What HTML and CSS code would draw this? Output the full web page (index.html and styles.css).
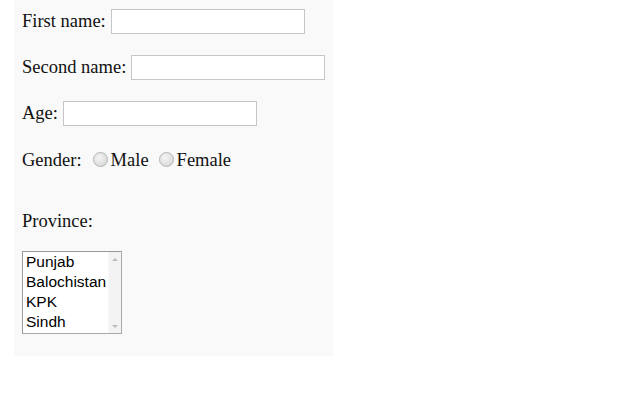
FILE: index.html
```html
<!DOCTYPE html>
<html>
<head>
<meta charset="utf-8">
<link rel="stylesheet" href="styles.css">
</head>
<body>
<form class="form">
  <div class="field"><label>First name:</label><input type="text" class="text-input"></div>
  <div class="field"><label>Second name:</label><input type="text" class="text-input"></div>
  <div class="field"><label>Age:</label><input type="text" class="text-input"></div>
  <div class="gender">
    <span>Gender:</span>
    <span class="radio radio-first"></span><span class="radio-label">Male</span>
    <span class="radio radio-second"></span><span class="radio-label">Female</span>
  </div>
  <div class="province">Province:</div>
  <div class="listbox">
    <div class="options">
      <div class="option">Punjab</div>
      <div class="option">Balochistan</div>
      <div class="option">KPK</div>
      <div class="option">Sindh</div>
    </div>
    <div class="scrollbar">
      <span class="arrow arrow-up"></span>
      <span class="arrow arrow-down"></span>
    </div>
  </div>
</form>
</body>
</html>
```
FILE: styles.css
```css
html, body {
  margin: 0;
  background: #ffffff;
}

.form {
  margin: 0 0 0 14px;
  width: 319px;
  height: 356px;
  box-sizing: border-box;
  padding: 9px 8px 0;
  background: #f9f9f9;
  font-family: "Liberation Serif", "Times New Roman", serif;
  font-size: 18.5px;
  color: #111111;
}

.field {
  display: flex;
  align-items: center;
  gap: 5px;
  height: 25px;
  margin-bottom: 21px;
  white-space: nowrap;
}

.field label {
  flex-shrink: 0;
}

.text-input {
  flex-shrink: 0;
  width: 194px;
  height: 25px;
  box-sizing: border-box;
  margin: 0;
  padding: 0 2px;
  border: 1px solid #c6c6c6;
  background: #ffffff;
  outline: none;
}

.gender {
  display: flex;
  align-items: baseline;
  height: 25px;
  line-height: 25px;
  margin-bottom: 35px;
  padding-top: 1px;
  white-space: nowrap;
}

.radio {
  display: inline-block;
  width: 13px;
  height: 13px;
  border-radius: 50%;
  border: 1px solid #b4b4b4;
  background: radial-gradient(circle at 40% 35%, #f4f4f4 0%, #e2e2e2 55%, #cfcfcf 100%);
  box-sizing: content-box;
  position: relative;
  top: 1px;
}

.radio-first {
  margin: 0 3px 0 11px;
}

.radio-second {
  margin: 0 3px 0 10px;
}

.province {
  height: 25px;
  line-height: 25px;
  margin-bottom: 17px;
  padding-top: 1px;
}

.listbox {
  display: flex;
  width: 100px;
  height: 83px;
  box-sizing: border-box;
  border: 1px solid #a9a9a9;
  border-top-color: #9a9a9a;
  border-left-color: #9a9a9a;
  background: #ffffff;
  font-family: "Liberation Sans", Arial, sans-serif;
  font-size: 15.5px;
  line-height: 20px;
  color: #000000;
}

.options {
  flex: 1;
  padding-left: 3px;
}

.option {
  height: 20px;
  white-space: nowrap;
}

.scrollbar {
  width: 13px;
  background: #f3f3f3;
  border-left: 1px solid #f8f8f8;
  display: flex;
  flex-direction: column;
  justify-content: space-between;
  align-items: center;
  padding: 6px 0 5px;
  box-sizing: border-box;
}

.arrow {
  width: 0;
  height: 0;
  border-left: 3px solid transparent;
  border-right: 3px solid transparent;
}

.arrow-up {
  border-bottom: 3px solid #bdbdbd;
}

.arrow-down {
  border-top: 3px solid #bdbdbd;
}
```
